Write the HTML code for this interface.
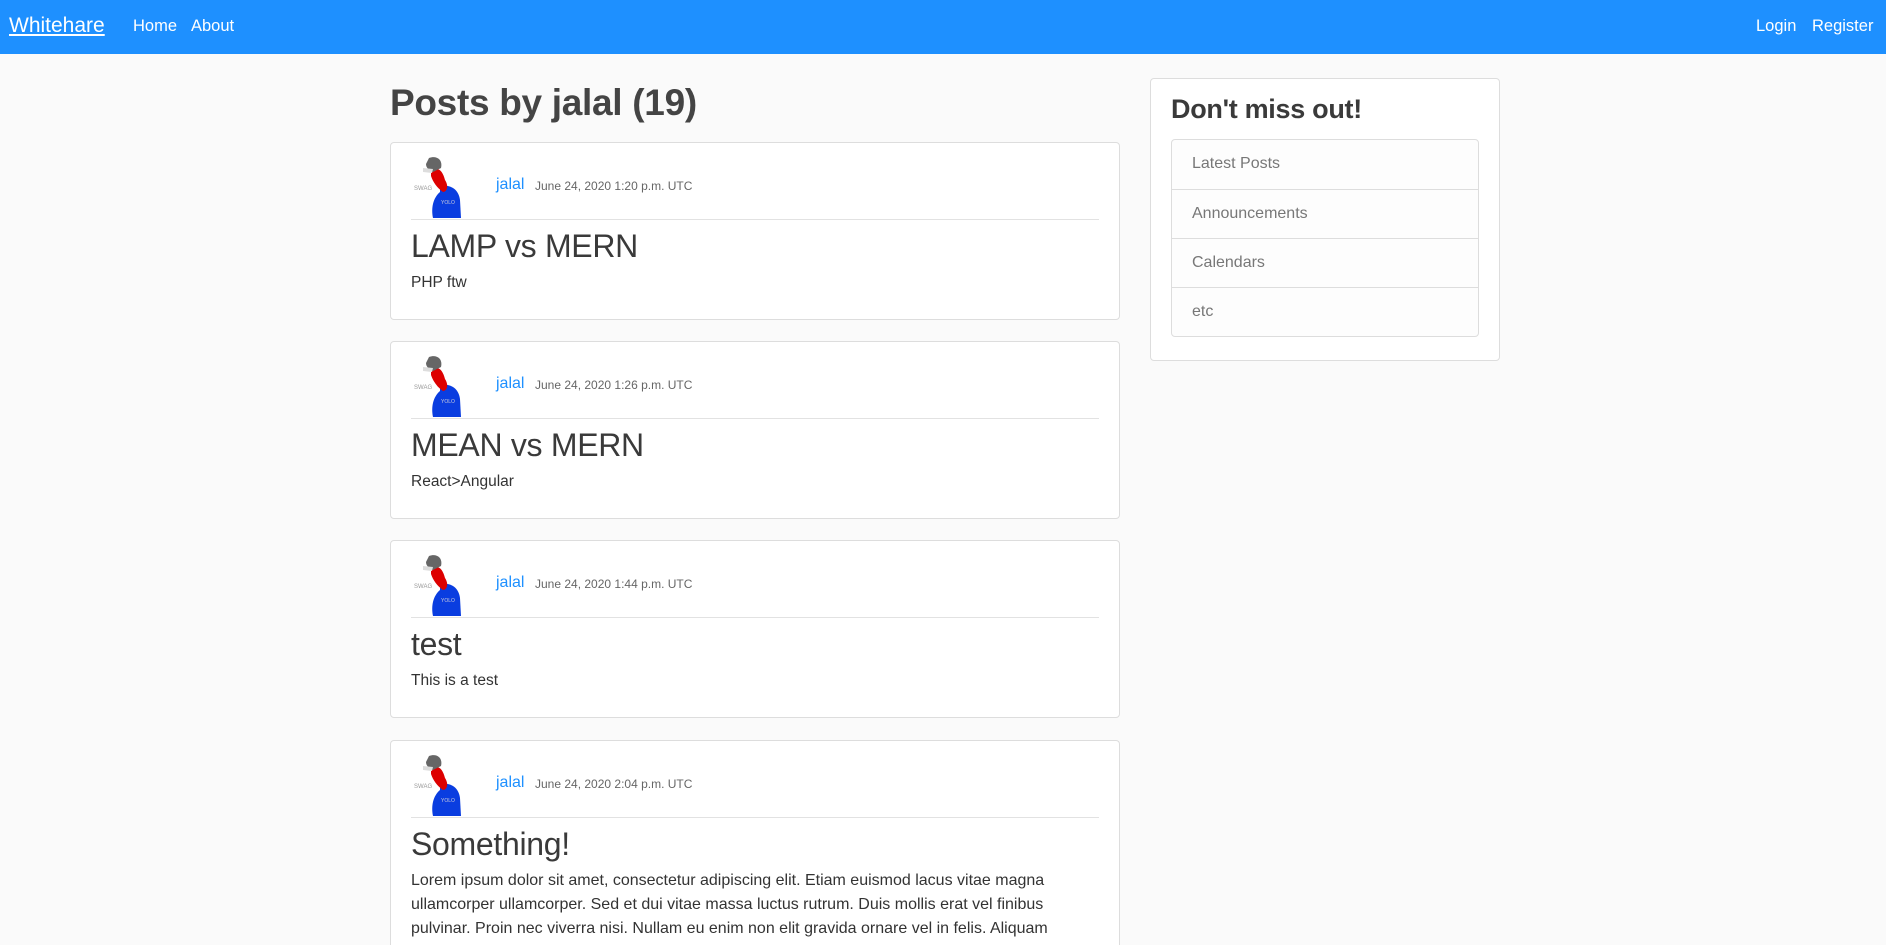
<!DOCTYPE html>
<html style="overflow:hidden;height:945px"><head><meta charset="utf-8"><style>
*{box-sizing:border-box;margin:0;padding:0}
html,body{width:1886px;height:945px;overflow:hidden}
body{background:#fafafa;font-family:"Liberation Sans",sans-serif;color:#444;position:relative}
.nav{position:absolute;left:0;top:0;width:1886px;height:54px;background:#1e90ff;color:#fff;font-size:16.5px}
.nav span{position:absolute;top:17px}
.brand{font-size:21px;text-decoration:underline;top:14px!important}
h1{position:absolute;left:390px;top:82px;font-size:37px;font-weight:bold;color:#444;letter-spacing:-0.3px}
.card{position:absolute;left:390px;width:730px;height:178px;background:#fff;border:1px solid #ddd;border-radius:4px}
.av{position:absolute;left:20px;top:13px}
.name{position:absolute;left:105px;top:33px;color:#1e90ff;font-size:16px}
.date{position:absolute;left:144px;top:36px;color:#666;font-size:12px}
.hr{position:absolute;left:20px;right:20px;top:76px;border-top:1px solid #e2e2e2}
.card h2{position:absolute;left:20px;top:85px;font-size:32px;font-weight:normal;color:#3a3a3a;letter-spacing:-0.3px}
.card p{position:absolute;left:20px;top:128px;font-size:15.5px;line-height:24px;color:#333;white-space:nowrap}
.side{position:absolute;left:1150px;top:78px;width:350px;height:283px;background:#fff;border:1px solid #ddd;border-radius:4px}
.side h3{position:absolute;left:20px;top:15px;font-size:27px;font-weight:bold;color:#3a3a3a;letter-spacing:-0.3px}
.list{position:absolute;left:20px;top:60px;width:308px;border:1px solid #ddd;border-radius:4px;background:#fdfdfd}
.list div{height:49px;line-height:48px;padding-left:20px;color:#777;font-size:16px;border-top:1px solid #ddd}
.list div:first-child{border-top:none}
</style></head><body>
<div class="nav"><span class="brand" style="left:9px">Whitehare</span><span style="left:133px">Home</span><span style="left:191px">About</span><span style="left:1756px">Login</span><span style="left:1812px">Register</span></div>
<h1>Posts by jalal (19)</h1>

<svg width="0" height="0" style="position:absolute"><defs><g id="a">
<text x="3" y="34" font-size="6" fill="#999" font-family="Liberation Sans">SWAG</text>
<path d="M29 30 C40 28 48 34 49 44 L50 62 L22 62 C20 52 22 42 29 36Z" fill="#0a3de0"/>
<path d="M20 14 C28 10 32 16 34 24 C38 30 36 36 32 36 C26 32 22 26 20 20Z" fill="#d00"/>
<path d="M18 2 C26 -1 32 4 30 12 L22 16 C18 14 15 12 15 8Z" fill="#666"/>
<path d="M12 12 L22 13 L21 17 L12 16Z" fill="#ddd"/>
<text x="30" y="48" font-size="5" fill="#ccd" font-family="Liberation Sans">YOLO</text>
</g></defs></svg>

<div class="card" style="top:142px"><svg class="av" width="60" height="63"><use href="#a"/></svg><span class="name">jalal</span><span class="date">June 24, 2020 1:20 p.m. UTC</span><div class="hr"></div><h2>LAMP vs MERN</h2><p>PHP ftw</p></div>
<div class="card" style="top:341px"><svg class="av" width="60" height="63"><use href="#a"/></svg><span class="name">jalal</span><span class="date">June 24, 2020 1:26 p.m. UTC</span><div class="hr"></div><h2>MEAN vs MERN</h2><p>React&gt;Angular</p></div>
<div class="card" style="top:540px"><svg class="av" width="60" height="63"><use href="#a"/></svg><span class="name">jalal</span><span class="date">June 24, 2020 1:44 p.m. UTC</span><div class="hr"></div><h2>test</h2><p>This is a test</p></div>
<div class="card" style="top:740px;height:215px;border-bottom:none;overflow:hidden"><svg class="av" width="60" height="63"><use href="#a"/></svg><span class="name">jalal</span><span class="date">June 24, 2020 2:04 p.m. UTC</span><div class="hr"></div><h2>Something!</h2><p style="font-size:16px">Lorem ipsum dolor sit amet, consectetur adipiscing elit. Etiam euismod lacus vitae magna<br>ullamcorper ullamcorper. Sed et dui vitae massa luctus rutrum. Duis mollis erat vel finibus<br>pulvinar. Proin nec viverra nisi. Nullam eu enim non elit gravida ornare vel in felis. Aliquam</p></div>

<div class="side"><h3>Don't miss out!</h3><div class="list"><div>Latest Posts</div><div>Announcements</div><div>Calendars</div><div>etc</div></div></div>
</body></html>
